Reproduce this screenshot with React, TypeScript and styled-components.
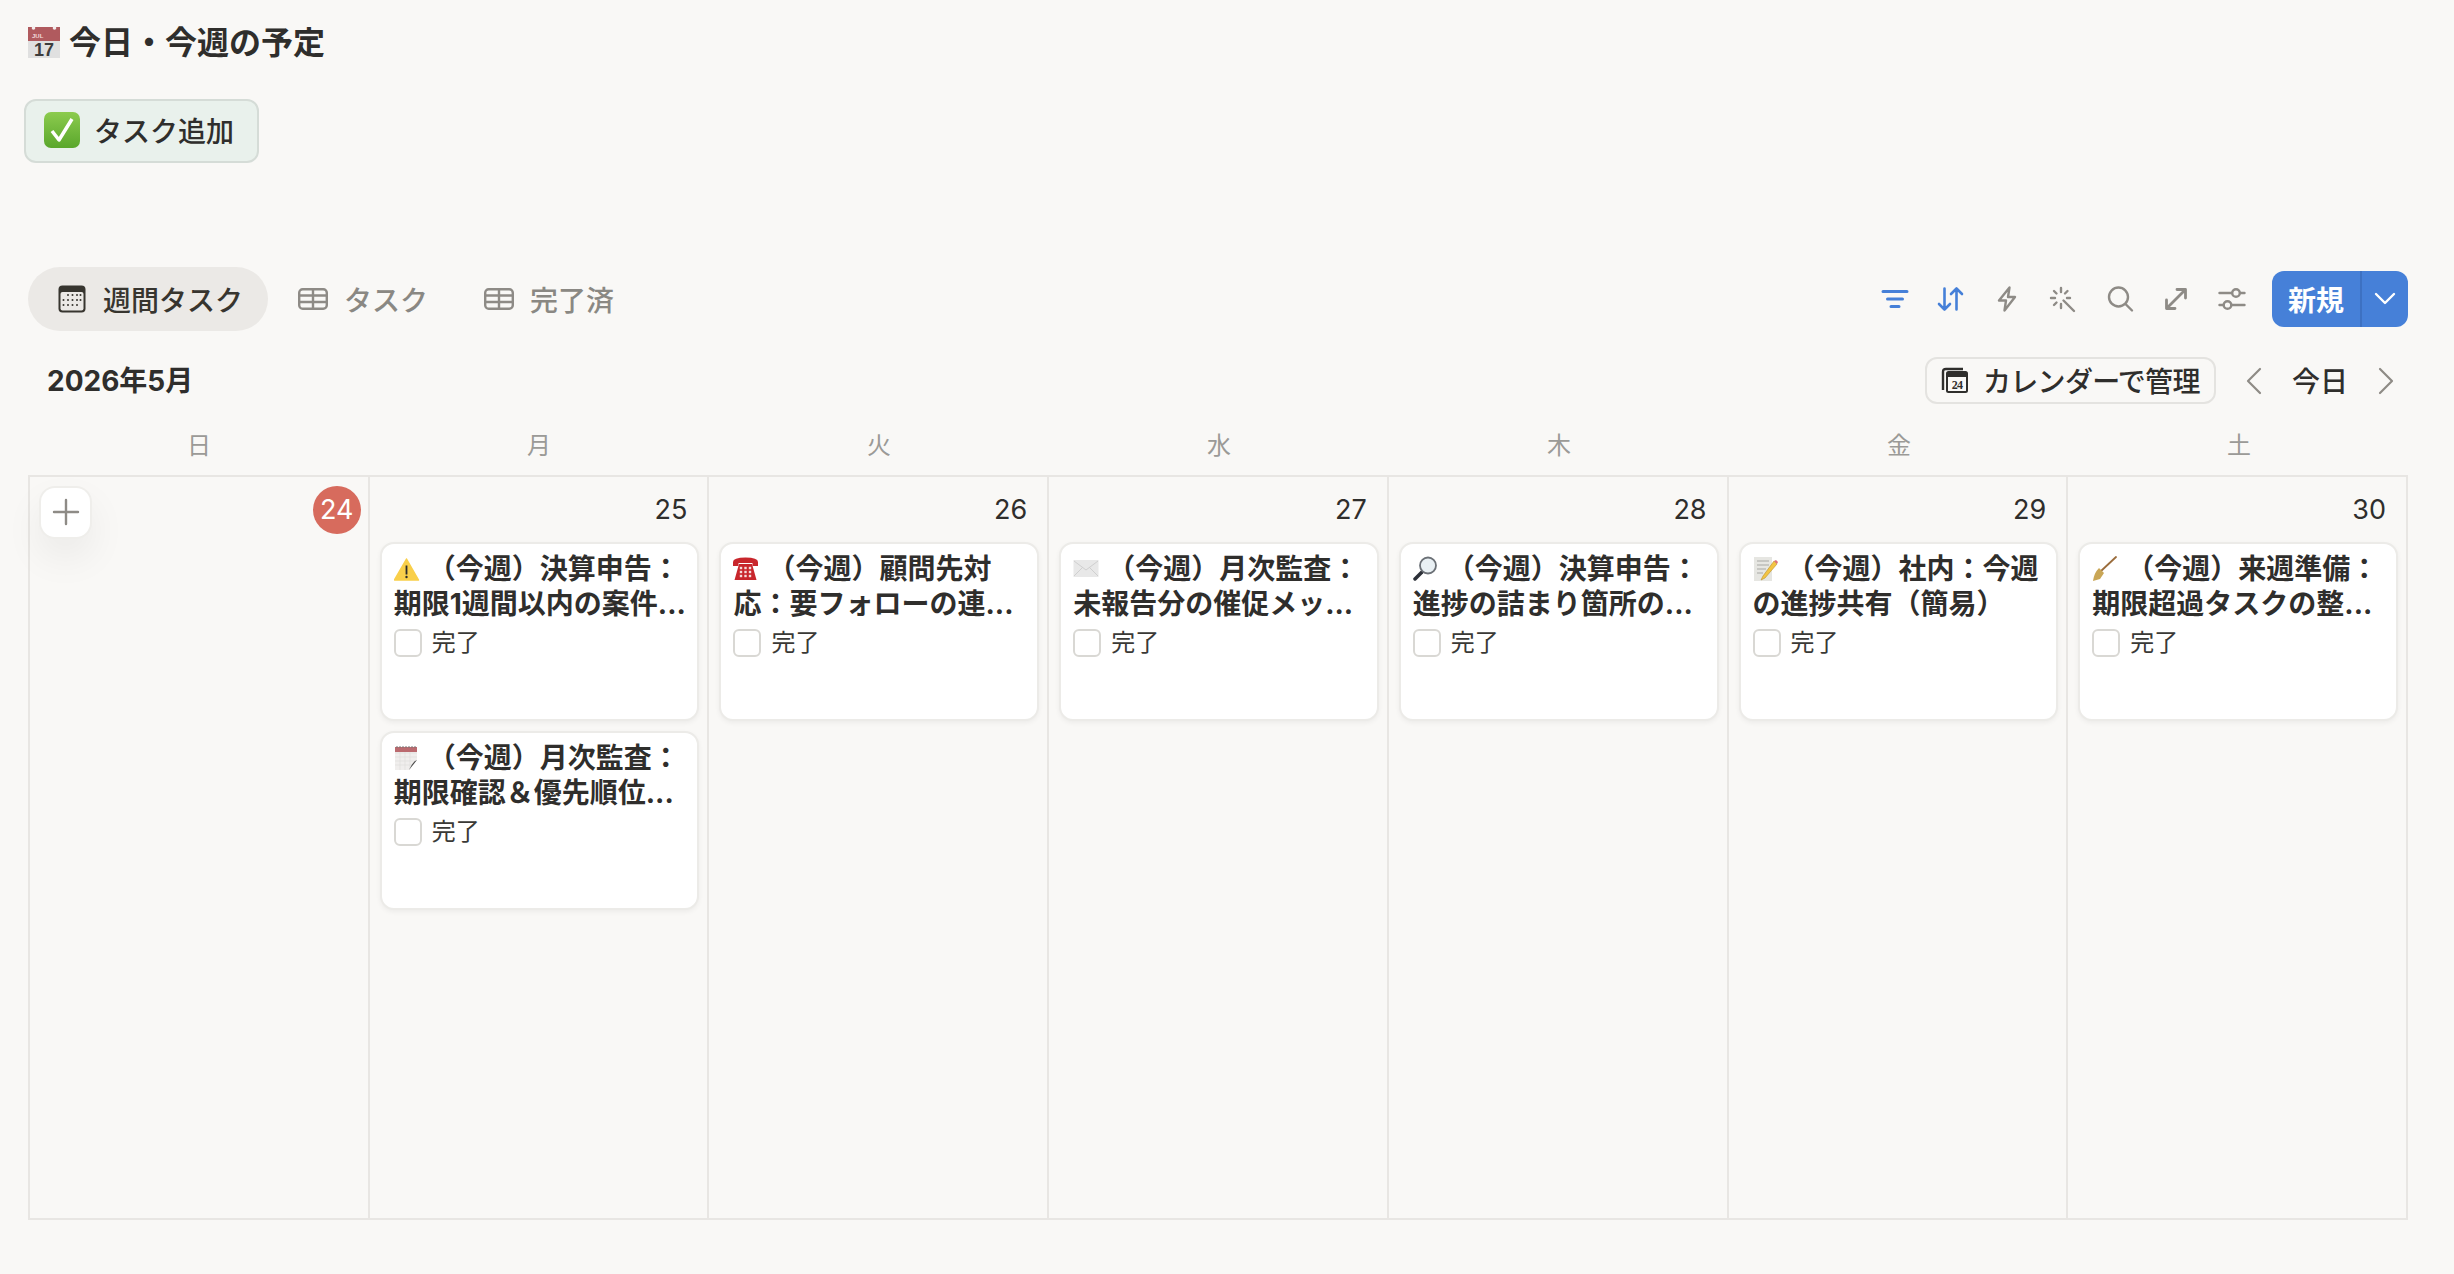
import styled, {createGlobalStyle} from "styled-components";
import {ReactNode} from "react";

const Global = createGlobalStyle`
html, body {
    margin: 0;
    padding: 0;
    background: #f9f8f6;
}
body {
    font-family: Inter, "Noto Sans CJK JP", sans-serif;
    color: #2f2e2c;
}
* { box-sizing: border-box; }
`

const Page = styled.div`
width: 2454px;
height: 1274px;
overflow: hidden;
display: flex;
flex-direction: column;
`

const TitleRow = styled.div`
display: flex;
align-items: center;
gap: 9px;
margin: 21px 0 0 28px;
height: 42px;
font-size: 32px;
font-weight: 700;
color: #2f2e2c;
`

const TitleText = styled.span`
position: relative;
top: -2px;
`

const QuickButton = styled.div`
display: flex;
align-items: center;
gap: 14px;
width: 235px;
height: 64px;
margin: 36px 0 0 24px;
padding: 0 0 3px 18px;
background: #e9f1ec;
border: 2px solid #d5dcd7;
border-radius: 12px;
font-size: 28px;
font-weight: 500;
`

const Toolbar = styled.div`
display: flex;
align-items: center;
justify-content: space-between;
height: 64px;
margin: 104px 46px 0 28px;
`

const Tabs = styled.div`
display: flex;
align-items: center;
`

const Tab = styled.div<{$active?: boolean}>`
display: flex;
align-items: center;
gap: ${p => p.$active ? 17 : 16}px;
height: 64px;
padding: 0 ${p => p.$active ? 25 : 26}px 0 30px;
border-radius: 32px;
font-size: 28px;
font-weight: 500;
color: ${p => p.$active ? '#37352f' : '#8a8883'};
background: ${p => p.$active ? '#ebe9e6' : 'transparent'};
`

const Actions = styled.div`
display: flex;
align-items: center;
`

const IconButton = styled.div<{$color?: string}>`
width: 56.2px;
height: 56px;
display: flex;
align-items: center;
justify-content: center;
color: ${p => p.$color || '#8e8b86'};
`

const NewButton = styled.div`
display: flex;
height: 56px;
width: 136px;
margin-left: 12px;
background: #4680d8;
border-radius: 12px;
color: white;
font-size: 28px;
font-weight: 600;
`

const NewLabel = styled.div`
width: 90px;
display: flex;
align-items: center;
justify-content: center;
border-right: 2px solid #3d71c2;
`

const NewArrow = styled.div`
flex: 1;
display: flex;
align-items: center;
justify-content: center;
`

const SubBar = styled.div`
display: flex;
align-items: center;
justify-content: space-between;
height: 47px;
margin: 26px 56px 0 47px;
`

const MonthLabel = styled.div`
padding-bottom: 3px;
font-size: 28px;
font-weight: 700;
`

const CalendarNav = styled.div`
display: flex;
align-items: center;
`

const ManageButton = styled.div`
display: flex;
align-items: center;
gap: 15px;
width: 291px;
height: 47px;
padding: 0 0 2px 13px;
margin-right: 26px;
border: 2px solid #e4e3e0;
border-radius: 12px;
font-size: 28px;
font-weight: 500;
letter-spacing: -0.7px;
white-space: nowrap;
`

const NavArrow = styled.div`
width: 24px;
height: 30px;
display: flex;
align-items: center;
justify-content: center;
color: #8e8b86;
`

const TodayLabel = styled.div`
width: 108px;
padding-bottom: 2px;
text-align: center;
font-size: 28px;
font-weight: 500;
`

const WeekRow = styled.div`
display: grid;
grid-template-columns: repeat(7, 1fr);
width: 2380px;
height: 38px;
margin: 20px 0 0 29px;
`

const WeekDay = styled.div`
display: flex;
align-items: center;
justify-content: center;
font-size: 24px;
color: #9b9a97;
`

const CalendarGrid = styled.div`
display: grid;
grid-template-columns: repeat(7, 1fr);
width: 2380px;
height: 745px;
margin: 13px 0 0 28px;
border-top: 2px solid #e8e6e3;
border-left: 2px solid #e8e6e3;
border-bottom: 2px solid #e8e6e3;
`

const DayCell = styled.div`
border-right: 2px solid #e8e6e3;
display: flex;
flex-direction: column;
`

const DayHeader = styled.div`
display: flex;
align-items: center;
justify-content: space-between;
height: 65px;
padding: 0 7px 0 11px;
`

const AddButton = styled.div`
width: 49px;
height: 49px;
display: flex;
align-items: center;
justify-content: center;
margin-top: 5px;
background: white;
border-radius: 14px;
color: #8e8b86;
box-shadow: 0 0 0 2px #efeeeb, 0 18px 40px rgba(0, 0, 0, 0.07);
`

const DayNumber = styled.div<{$today?: boolean}>`
margin-left: auto;
width: 48px;
height: 48px;
display: flex;
align-items: center;
justify-content: ${p => p.$today ? 'center' : 'flex-end'};
padding-right: ${p => p.$today ? 0 : 13}px;
border-radius: 50%;
font-size: 27px;
white-space: nowrap;
color: ${p => p.$today ? 'white' : '#2f2e2c'};
background: ${p => p.$today ? '#d76b5d' : 'transparent'};
`

const CardList = styled.div`
display: flex;
flex-direction: column;
gap: 10px;
padding: 0 8px 0 10px;
`

const Card = styled.div`
height: 179px;
padding: 8px 2px 0 12px;
background: white;
border: 2px solid #ecebe8;
border-radius: 14px;
box-shadow: 0 2px 5px rgba(0, 0, 0, 0.05);
`

const CardTitle = styled.div`
height: 69px;
font-size: 28px;
line-height: 34.5px;
font-weight: 700;
color: #2f2e2c;
`

const EmojiSlot = styled.span`
display: inline-block;
width: 34px;
height: 26px;
vertical-align: -3px;
`

const DoneRow = styled.div`
display: flex;
align-items: center;
gap: 10px;
margin-top: 4px;
font-size: 24px;
color: #3a3936;
`

const DoneLabel = styled.span`
position: relative;
top: -2px;
`

const CheckBox = styled.div`
width: 28px;
height: 28px;
background: white;
border: 2px solid #d9d8d4;
border-radius: 6px;
`

const Icon = ({size = 28, width, height, children}: {size?: number, width?: number, height?: number, children: ReactNode}) => (
    <svg width={width || size} height={height || size} viewBox={`0 0 ${width || size} ${height || size}`} fill="none" stroke="currentColor" strokeWidth={2.4} strokeLinecap="round" strokeLinejoin="round">
        {children}
    </svg>
)

const FilterIcon = () => (
    <Icon>
        <path d="M2 6.5h24M6.5 14h15M10 21.5h8" strokeWidth={3} />
    </Icon>
)

const SortIcon = () => (
    <Icon>
        <path d="M7.5 3.5v21M2 19l5.5 5.5L13 19M19.5 24.5v-21M14 9l5.5-5.5L25 9" strokeWidth={2.6} />
    </Icon>
)

const BoltIcon = () => (
    <Icon>
        <path d="M16.5 2.5 6 15.5h7l-1.5 10L22 12h-7z" />
    </Icon>
)

const WandIcon = () => (
    <Icon>
        <path d="M12 3v4M2 13h4M12 19v4M18 13h3M5 6l2.500 2.500M5 20l2.500-2.500M18.500 6 16 8.500M14.500 15.500 25 26" />
    </Icon>
)

const SearchIcon = () => (
    <Icon>
        <circle cx="12.500" cy="12" r="9.500" />
        <path d="m19.500 19 6.500 6.500" />
    </Icon>
)

const ExpandIcon = () => (
    <Icon>
        <path d="m5 23 18-18M15 4.500h8.500V13M4.500 15v8.500H13" strokeWidth={2.8} />
    </Icon>
)

const SlidersIcon = () => (
    <Icon>
        <path d="M1.500 8h12.500M22 8h4.500M1.500 20h4M13.500 20h13" />
        <circle cx="18" cy="8" r="3.800" />
        <circle cx="9.500" cy="20" r="3.800" />
    </Icon>
)

const Chevron = ({dir}: {dir: 'down' | 'left' | 'right'}) => {
    if(dir === 'down'){
        return <Icon width={24} height={16}><path d="M3 3l9 9 9-9" /></Icon>
    }
    return (
        <Icon width={18} height={28}>
            <path d={dir === 'left' ? 'M15 2 3 14l12 12' : 'M3 2l12 12L3 26'} strokeWidth={2.2} />
        </Icon>
    )
}

const WeekCalendarIcon = () => (
    <svg width="28" height="28" viewBox="0 0 28 28">
        <rect x="0.500" y="0.500" width="27" height="27" rx="4" fill="#37352f" />
        <rect x="2.500" y="7" width="23" height="18.500" rx="2" fill="#ebe9e6" />
        {[10, 15, 20].map(y => [6, 10.500, 15, 19.500, 23].map(x => (
            (y === 10 && x < 10) || (y === 20 && x > 20) ? null :
                <circle key={`${x}-${y}`} cx={x - 0.500} cy={y} r="1" fill="#37352f" />
        )))}
    </svg>
)

const TableIcon = () => (
    <svg width="30" height="22" viewBox="0 0 30 22" fill="none" stroke="#8e8b86" strokeWidth="2.400">
        <rect x="1.200" y="1.200" width="27.600" height="19.600" rx="3.500" />
        <path d="M1.200 7.500h27.600M1.200 14h27.600M15 1.200v19.600" />
    </svg>
)

const ManageIcon = () => (
    <svg width="28" height="26" viewBox="0 0 28 26">
        <path d="M3 23V5q0-3 3-3h17" fill="none" stroke="#2f2e2c" strokeWidth="2.400" />
        <rect x="7" y="5" width="20" height="20" rx="1.500" fill="none" stroke="#2f2e2c" strokeWidth="2" />
        <rect x="7" y="5" width="20" height="5" fill="#2f2e2c" />
        <text x="17" y="22" fontSize="12" fontWeight="700" textAnchor="middle" fontFamily="'Liberation Serif', serif" fill="#2f2e2c">24</text>
    </svg>
)

const CalendarEmoji = () => (
    <svg width="32" height="32" viewBox="0 0 32 32">
        <rect y="1" width="32" height="14" fill="#b05a5e" />
        <rect y="15" width="32" height="17" fill="#e0e0e0" />
        <circle cx="5.500" cy="2" r="1.800" fill="#f4eeee" />
        <circle cx="26.500" cy="2" r="1.800" fill="#f4eeee" />
        <text x="4" y="12" fontSize="6" fontFamily="'Liberation Sans', sans-serif" fill="#f3dcdc">JUL</text>
        <text x="16" y="29.500" fontSize="18" textAnchor="middle" fontFamily="'Liberation Sans', sans-serif" fill="#3c3c3c">17</text>
    </svg>
)

const CheckEmoji = () => (
    <svg width="36" height="36" viewBox="0 0 36 36">
        <defs>
            <linearGradient id="greenBox" x1="0" y1="0" x2="0" y2="1">
                <stop offset="0" stopColor="#8ccb4e" />
                <stop offset="1" stopColor="#5aa72c" />
            </linearGradient>
        </defs>
        <rect width="36" height="36" rx="7" fill="url(#greenBox)" />
        <path d="M8 19l7 9L28 7" fill="none" stroke="white" strokeWidth="3.500" strokeLinejoin="round" />
    </svg>
)

const emojis: {[key: string]: ReactNode} = {
    warning: (
        <>
            <path d="M12.500 3 24.500 24h-24z" fill="#f9cf4a" stroke="#f9cf4a" strokeWidth="1.500" strokeLinejoin="round" />
            <rect x="11.600" y="9.500" width="1.800" height="9" fill="#2a2a2a" />
            <circle cx="12.500" cy="21" r="1.200" fill="#2a2a2a" />
        </>
    ),
    notepad: (
        <>
            <rect x="1" y="2" width="22" height="23" fill="#f0eeed" />
            <path d="M1 8h22M1 12h22M1 16h22M1 20h22M6 4v21M11 4v21M16 4v21" stroke="#e0dedc" strokeWidth="0.700" />
            <rect x="1" y="2" width="22" height="5" fill="#bb6a6f" />
            <path d="M3 1v2M6 1v2M9 1v2M12 1v2M15 1v2M18 1v2M21 1v2" stroke="#777" strokeWidth="1" />
            <path d="M15 25 23 15v10z" fill="#fff" />
            <path d="M15 25 23 15q-4 1-8 10z" fill="#4a4a4a" />
        </>
    ),
    phone: (
        <>
            <path d="M0 10V6q0-4.500 12.500-4.500T25 6v4h-5.500V7H5.500v3z" fill="#c8262c" />
            <path d="M6 8h13l4.500 16H1.500z" fill="#c8262c" />
            {[12, 16, 20].map(y => [8, 12.500, 17].map(x => (
                <rect key={`${x}-${y}`} x={x - 1.200} y={y - 1.200} width="2.400" height="2.400" fill="#f6dcdc" />
            )))}
        </>
    ),
    mail: (
        <>
            <rect x="0.500" y="4" width="25" height="17" fill="#e8e8e8" />
            <path d="M1 5l12 9 12-9M1 20l9-9M25 20l-9-9" fill="none" stroke="#cfcfcf" strokeWidth="1" />
        </>
    ),
    search: (
        <>
            <path d="M9 16 2 23" stroke="#2c3038" strokeWidth="3.500" strokeLinecap="round" />
            <circle cx="15" cy="9.500" r="8" fill="#e9f0f4" stroke="#6b7076" strokeWidth="1.800" />
        </>
    ),
    memo: (
        <>
            <rect x="1" y="1" width="18" height="24" fill="#e6e6e2" />
            <path d="M4 5h12M4 9h12M4 13h9M4 17h6" stroke="#a8a8a4" strokeWidth="1.200" />
            <path d="M21 5 10 20l-2 4 4-2L24 8z" fill="#f3c443" stroke="#b8902c" strokeWidth="0.600" />
            <path d="M21 5l3 3 1-2-2-2z" fill="#e0707a" />
        </>
    ),
    broom: (
        <>
            <path d="M24 1 9 15" stroke="#9a6c3c" strokeWidth="1.800" strokeLinecap="round" />
            <path d="M7 12l5 5-4 6-7 2q1-8 6-13z" fill="#c9a656" />
        </>
    ),
}

const Emoji = ({name}: {name: string}) => (
    <EmojiSlot>
        <svg width="26" height="26" viewBox="0 0 26 26">{emojis[name]}</svg>
    </EmojiSlot>
)

type Task = {emoji: string, title: string}

const days: {date: number, tasks: Task[]}[] = [
    {date: 24, tasks: []},
    {date: 25, tasks: [
        {emoji: 'warning', title: '（今週）決算申告：期限1週間以内の案件...'},
        {emoji: 'notepad', title: '（今週）月次監査：期限確認＆優先順位...'},
    ]},
    {date: 26, tasks: [{emoji: 'phone', title: '（今週）顧問先対応：要フォローの連...'}]},
    {date: 27, tasks: [{emoji: 'mail', title: '（今週）月次監査：未報告分の催促メッ...'}]},
    {date: 28, tasks: [{emoji: 'search', title: '（今週）決算申告：進捗の詰まり箇所の...'}]},
    {date: 29, tasks: [{emoji: 'memo', title: '（今週）社内：今週の進捗共有（簡易）'}]},
    {date: 30, tasks: [{emoji: 'broom', title: '（今週）来週準備：期限超過タスクの整...'}]},
]

const weekDays = ['日', '月', '火', '水', '木', '金', '土']

const App = () => {
    return (
        <Page>
            <Global />
            <TitleRow>
                <CalendarEmoji />
                <TitleText>今日・今週の予定</TitleText>
            </TitleRow>
            <QuickButton>
                <CheckEmoji />
                タスク追加
            </QuickButton>
            <Toolbar>
                <Tabs>
                    <Tab $active><WeekCalendarIcon />週間タスク</Tab>
                    <Tab><TableIcon />タスク</Tab>
                    <Tab><TableIcon />完了済</Tab>
                </Tabs>
                <Actions>
                    <IconButton $color="#4680d8"><FilterIcon /></IconButton>
                    <IconButton $color="#4680d8"><SortIcon /></IconButton>
                    <IconButton><BoltIcon /></IconButton>
                    <IconButton><WandIcon /></IconButton>
                    <IconButton><SearchIcon /></IconButton>
                    <IconButton><ExpandIcon /></IconButton>
                    <IconButton><SlidersIcon /></IconButton>
                    <NewButton>
                        <NewLabel>新規</NewLabel>
                        <NewArrow><Chevron dir="down" /></NewArrow>
                    </NewButton>
                </Actions>
            </Toolbar>
            <SubBar>
                <MonthLabel>2026年5月</MonthLabel>
                <CalendarNav>
                    <ManageButton><ManageIcon />カレンダーで管理</ManageButton>
                    <NavArrow><Chevron dir="left" /></NavArrow>
                    <TodayLabel>今日</TodayLabel>
                    <NavArrow><Chevron dir="right" /></NavArrow>
                </CalendarNav>
            </SubBar>
            <WeekRow>
                {weekDays.map(d => <WeekDay key={d}>{d}</WeekDay>)}
            </WeekRow>
            <CalendarGrid>
                {days.map(day => (
                    <DayCell key={day.date}>
                        <DayHeader>
                            {day.date === 24 &&
                                <AddButton>
                                    <Icon><path d="M14 2v24M2 14h24" /></Icon>
                                </AddButton>
                            }
                            <DayNumber $today={day.date === 24}>{day.date}</DayNumber>
                        </DayHeader>
                        <CardList>
                            {day.tasks.map(task => (
                                <Card key={task.title}>
                                    <CardTitle><Emoji name={task.emoji} />{task.title}</CardTitle>
                                    <DoneRow><CheckBox /><DoneLabel>完了</DoneLabel></DoneRow>
                                </Card>
                            ))}
                        </CardList>
                    </DayCell>
                ))}
            </CalendarGrid>
        </Page>
    )
}

export default App;
